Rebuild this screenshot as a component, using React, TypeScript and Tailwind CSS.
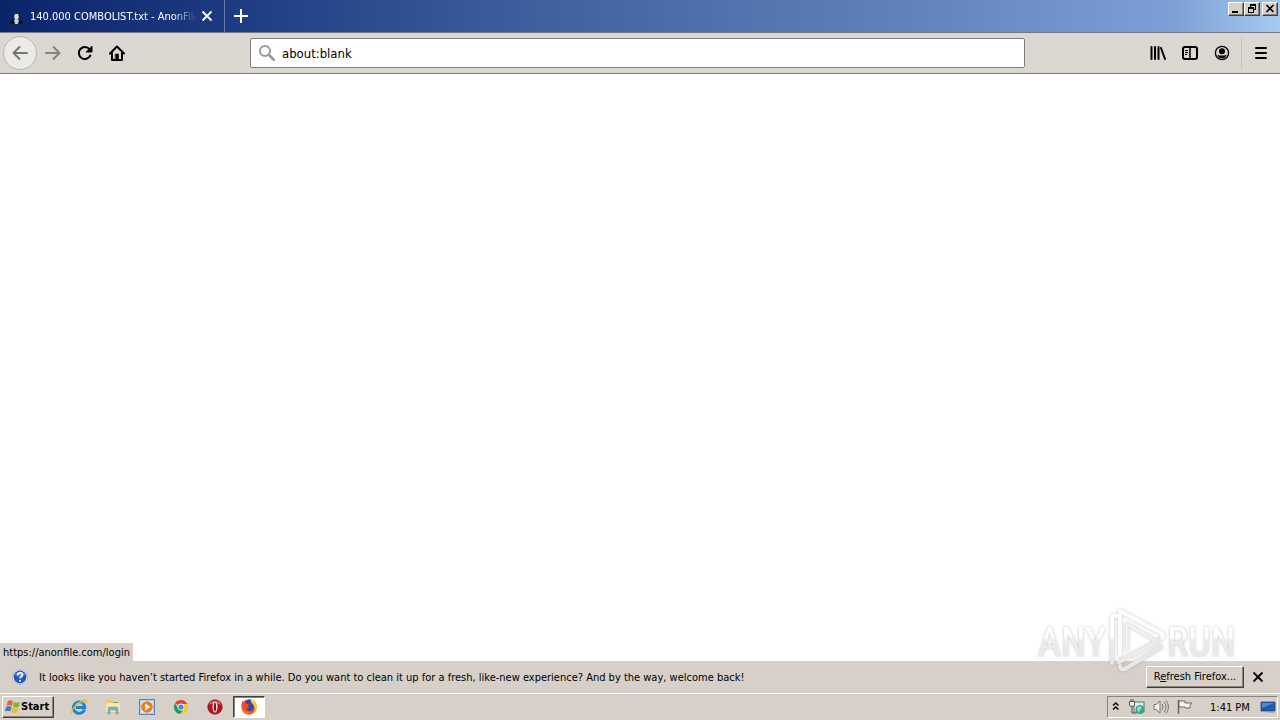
import type { ReactNode } from "react";

const raised =
  "border border-t-white border-l-white border-r-[#404040] border-b-[#404040] bg-[#d6d0c8] shadow-[inset_-1px_-1px_0_#88847c]";

function ToolButton({ label, children }: { label: string; children: ReactNode }) {
  return (
    <button aria-label={label} className="flex size-8 shrink-0 items-center justify-center">
      {children}
    </button>
  );
}

function TitleBar() {
  return (
    <header className="flex h-[33px] shrink-0 items-stretch justify-between border-b border-[#77797f] bg-[linear-gradient(to_right,#0a246a,#1d3b82_18%,#3f609f_42%,#6284bc_72%,#7da1d6_92%,#a6caf0)] text-white">
      <div className="flex">
        <div className="flex w-[225px] items-center border-r border-[#6b7fae] pl-2">
          <svg className="mr-1.5 size-4 shrink-0" viewBox="0 0 16 16" aria-hidden="true">
            <path d="M1 18c0-4 2-6 5-6h5c3 0 4 2 4 6z" fill="#0b0d18" />
            <path d="M6 12l2-1 3 1-1 4H7z" fill="#c8ccd8" />
            <ellipse cx="8.5" cy="8.5" rx="2.2" ry="3.300" fill="#d9dee2" />
            <path d="M5.500 7.500C5 4 7 3.500 9 4c2 0 3 2 2 4l-1-2-3 0z" fill="#25283a" />
          </svg>
          <span className="w-[167px] overflow-hidden pt-0.5 whitespace-nowrap text-[11px] [mask-image:linear-gradient(to_right,black_142px,transparent)]">
            140.000 COMBOLIST.txt - AnonFiles
          </span>
          <button aria-label="Close tab" className="flex size-5 items-center justify-center">
            <svg className="size-3" viewBox="0 0 12 12" fill="none" stroke="white" strokeWidth="1.8">
              <path d="M1.5 1.5l9 9M10.5 1.5l-9 9" />
            </svg>
          </button>
        </div>
        <button aria-label="New tab" className="flex w-8 items-center justify-center">
          <svg className="size-4" viewBox="0 0 16 16" fill="none" stroke="white" strokeWidth="2">
            <path d="M8 1v14M1 8h14" />
          </svg>
        </button>
      </div>
      <div className="flex gap-0.5 pt-0.5 pr-0.5">
        <div className="flex">
          <button aria-label="Minimize" className={`h-[14px] w-4 ${raised}`}>
            <svg className="h-3 w-[14px]" viewBox="0 0 14 12" shapeRendering="crispEdges">
              <path d="M3 8h6v2H3z" />
            </svg>
          </button>
          <button aria-label="Restore" className={`h-[14px] w-4 ${raised}`}>
            <svg className="h-3 w-[14px]" viewBox="0 0 14 12" shapeRendering="crispEdges">
              <path d="M5 1h6v6H9V6h1V3H6v1H5zM3 4h6v6H3zM4 6v3h4V6z" fillRule="evenodd" />
            </svg>
          </button>
        </div>
        <button aria-label="Close window" className={`h-[14px] w-4 ${raised}`}>
          <svg className="h-3 w-[14px]" viewBox="0 0 14 12" fill="none" stroke="black" strokeWidth="1.6">
            <path d="M3.5 2l7 7M10.5 2l-7 7" />
          </svg>
        </button>
      </div>
    </header>
  );
}

function Toolbar() {
  return (
    <nav className="flex h-[41px] shrink-0 items-center border-b border-[#7b7974] bg-[#dbd7d1]">
      <div className="flex w-[250px] shrink-0 items-center pl-[3px]">
        <button
          aria-label="Back"
          className="flex size-[34px] shrink-0 items-center justify-center rounded-full border border-[#b9b5ae] bg-[#eceae6]"
        >
          <svg className="size-4" viewBox="0 0 16 16" fill="none" stroke="#777572" strokeWidth="2" strokeLinecap="round" strokeLinejoin="round">
            <path d="M15 8H1.5M7.5 2l-6 6 6 6" />
          </svg>
        </button>
        <ToolButton label="Forward">
          <svg className="size-4" viewBox="0 0 16 16" fill="none" stroke="#85827d" strokeWidth="2" strokeLinecap="round" strokeLinejoin="round">
            <path d="M1 8h13.500M8.500 2l6 6-6 6" />
          </svg>
        </ToolButton>
        <ToolButton label="Reload">
          <svg className="size-4" viewBox="0 0 16 16" fill="none" stroke="black" strokeWidth="2" strokeLinecap="round">
            <path d="M13.300 10.500A6 6 0 1 1 12.500 4.200L14 6" />
            <path d="M15 1.500V7H9.500z" fill="black" stroke="black" strokeWidth="1" strokeLinejoin="round" />
          </svg>
        </ToolButton>
        <ToolButton label="Home">
          <svg className="size-4" viewBox="0 0 16 16" fill="none" stroke="black" strokeWidth="2" strokeLinecap="round" strokeLinejoin="round">
            <path d="M1 8.500l7-7 7 7M3 8v7h10V8" />
            <path d="M6.500 9h3v6h-3z" fill="black" strokeWidth="0.500" />
          </svg>
        </ToolButton>
      </div>
      <label className="flex h-[30px] min-w-0 flex-1 items-center rounded-[2px] border border-[#7f7d79] bg-white pl-2">
        <svg className="mr-[7px] size-4 shrink-0" viewBox="0 0 16 16" fill="none" stroke="#999" strokeWidth="2" strokeLinecap="round">
          <circle cx="6" cy="6" r="5" />
          <path d="M10 10l5 5" strokeWidth="2.500" />
        </svg>
        <input
          aria-label="Address"
          defaultValue="about:blank"
          className="min-w-0 flex-1 bg-transparent pt-0.5 text-[13px] text-black outline-none"
        />
      </label>
      <div className="flex w-[255px] shrink-0 items-center justify-end pr-[3px]">
        <ToolButton label="Library">
          <svg className="size-4" viewBox="0 0 16 16" fill="none" stroke="black" strokeWidth="2" strokeLinecap="round">
            <path d="M1.500 2v12M5 2v12M8.500 2v12M11 3l4 11" />
          </svg>
        </ToolButton>
        <ToolButton label="Sidebars">
          <svg className="size-4" viewBox="0 0 16 16" fill="none" stroke="black">
            <rect x="1" y="2" width="14" height="12" rx="2" strokeWidth="2" />
            <path d="M8 2v12" strokeWidth="1.500" />
            <path d="M3 5.500h3M3 7.500h3M3 9.500h2" />
          </svg>
        </ToolButton>
        <ToolButton label="Account">
          <svg className="size-4" viewBox="0 0 16 16" fill="none" stroke="black">
            <circle cx="8" cy="8" r="6.600" strokeWidth="1.300" />
            <circle cx="8" cy="6.200" r="3" fill="black" stroke="none" />
            <path d="M3.500 9.500c1 1.200 2.500 1 4.500 1s3.500.2 4.500-1c0 2.500-2 4-4.500 4s-4.500-1.500-4.500-4z" fill="black" stroke="none" />
          </svg>
        </ToolButton>
        <div className="ml-[3px] flex h-8 items-center border-l border-[#c5c1ba] pl-[3px]">
          <ToolButton label="Open menu">
            <svg className="size-4" viewBox="0 0 16 16" fill="none" stroke="black" strokeWidth="2" strokeLinecap="round">
              <path d="M3 3h10M3 8h10M3 13h10" />
            </svg>
          </ToolButton>
        </div>
      </div>
    </nav>
  );
}

function Watermark() {
  return (
    <svg
      className="pointer-events-none absolute right-[40px] bottom-[18px] h-[70px] w-[204px]"
      viewBox="0 0 204 70"
      role="img"
      aria-label="ANY RUN"
    >
      <defs>
        <linearGradient id="fade" gradientUnits="userSpaceOnUse" x1="0" y1="0" x2="0" y2="70">
          <stop offset="0.460" stopColor="#fff" />
          <stop offset="0.500" stopColor="#ececec" />
          <stop offset="1" stopColor="#e6e5e4" />
        </linearGradient>
        <filter id="glow" x="-10%" y="-20%" width="120%" height="140%">
          <feDropShadow dx="0" dy="0" stdDeviation="1.500" floodColor="#777" floodOpacity="0.500" />
        </filter>
      </defs>
      <g filter="url(#glow)" fill="url(#fade)">
        <text x="2" y="51" fontFamily="'Roboto Condensed', 'Liberation Sans Narrow', sans-serif" fontSize="40">
          ANY
        </text>
        <text x="131" y="51" fontFamily="'Roboto Condensed', 'Liberation Sans Narrow', sans-serif" fontSize="40">
          RUN
        </text>
        <g fill="none" strokeWidth="4" strokeLinejoin="round" strokeLinecap="round">
          <path d="M83 11h-4q-3 0-3 3v44" stroke="url(#fade)" />
          <path d="M84 50V6l41 22q3 2 1 5" stroke="#fcfcfc" />
          <path d="M91 45V19l29 17" stroke="#f1f1f1" strokeWidth="3" />
          <path d="M83 57L124 35" stroke="#ebebeb" />
          <path d="M125 42L89 64q-5 1-5-3" stroke="#e9e7e5" />
        </g>
      </g>
    </svg>
  );
}

function NotificationBar() {
  return (
    <aside className="relative flex h-8 shrink-0 items-center bg-[#d6d0c8] pr-[14px] pl-3 text-[11px]">
      <svg className="mr-[11px] size-4 shrink-0" viewBox="0 0 16 16" aria-hidden="true">
        <circle cx="8" cy="8" r="7.500" fill="#e4ecf8" stroke="#8898b8" strokeWidth="0.500" />
        <circle cx="8" cy="8" r="6.400" fill="#2457b8" />
        <path d="M3 6a5.300 5 0 0 1 10 0c-3 2-7 2-10 0z" fill="#5b8bdc" />
        <path d="M5.700 6.300c0-3.500 5-3 4.700-.3C10.300 7.800 8 7.700 8 9.500" fill="none" stroke="white" strokeWidth="1.600" />
        <circle cx="8" cy="11.800" r="1" fill="white" />
      </svg>
      <p className="min-w-0 flex-1 pt-0.5 whitespace-nowrap">
        It looks like you haven’t started Firefox in a while. Do you want to clean it up for a fresh, like-new experience? And by the way, welcome back!
      </p>
      <button className={`mr-1.5 flex h-[22px] w-[98px] items-center justify-center whitespace-nowrap ${raised}`}>
        <span>
          R<u>e</u>fresh Firefox...
        </span>
      </button>
      <button aria-label="Dismiss" className="flex size-4 items-center justify-center">
        <svg className="size-3" viewBox="0 0 12 12" fill="none" stroke="black" strokeWidth="1.800">
          <path d="M1.500 1.500l9 9M10.500 1.500l-9 9" />
        </svg>
      </button>
    </aside>
  );
}

function ExplorerIcon() {
  return (
    <svg className="size-4" viewBox="0 0 16 16">
      <path d="M13.500 10.500A5.700 5.700 0 1 1 13.800 8.500H5" fill="none" stroke="#1684d2" strokeWidth="2.800" />
      <path d="M4 6a5 5 0 0 1 8-1" fill="none" stroke="#65c4f4" strokeWidth="1" />
      <path d="M1 15C-1 11 9 1 14.500 1.200c1.500.3 1 2 .5 3" fill="none" stroke="#e7b92c" strokeWidth="1.300" />
    </svg>
  );
}

function FolderIcon() {
  return (
    <svg className="size-4" viewBox="0 0 16 16">
      <path d="M1 2l1-1h4l1 2h7v11H1z" fill="#e9cb65" />
      <path d="M2 4h12l1 2v7H1V6z" fill="#f9e9a5" />
      <path d="M8 3h5v1H8z" fill="#59ad71" />
      <path d="M3 15V9.500Q3 8 4.500 8h7Q13 8 13 9.500V15h-2v-4H5v4z" fill="#6cb8e7" stroke="#4b94c9" strokeWidth="0.500" />
    </svg>
  );
}

function MediaIcon() {
  return (
    <svg className="size-4" viewBox="0 0 16 16">
      <rect x="0.500" y="0.500" width="15" height="15" fill="#a9cdef" stroke="#5486bd" />
      <path d="M2 2h12v12H2z" fill="#d5e8f8" />
      <circle cx="8" cy="8" r="5.800" fill="#ef7d13" />
      <path d="M6.200 4.500l5 3.500-5 3.500z" fill="white" />
    </svg>
  );
}

function ChromeIcon() {
  return (
    <svg className="size-4" viewBox="0 0 16 16">
      <path d="M8 8L2 4.200A7 7 0 0 1 14.300 5H8z" fill="#dc4437" />
      <path d="M8 8l-2.600 1.500L2 4.200A7 7 0 0 0 7.500 15L10.600 9.500z" fill="#239957" />
      <path d="M8 5h6.300A7 7 0 0 1 7.500 15L10.600 9.500z" fill="#f4c52c" />
      <circle cx="8" cy="8" r="3.400" fill="#f4f4f4" />
      <circle cx="8" cy="8" r="2.600" fill="#4285e8" />
    </svg>
  );
}

function OperaIcon() {
  return (
    <svg className="size-4" viewBox="0 0 16 16">
      <circle cx="8" cy="8" r="7.300" fill="#b51520" stroke="#801018" strokeWidth="0.500" />
      <path d="M2 6a6.300 6 0 0 1 12 0c-3-2-9-2-12 0z" fill="#dc6c6c" />
      <ellipse cx="8" cy="8" rx="2.500" ry="5.500" fill="#f7eded" />
      <ellipse cx="8" cy="8" rx="1.100" ry="4.600" fill="#90101a" />
    </svg>
  );
}

function FirefoxIcon() {
  return (
    <svg className="size-[18px]" viewBox="0 0 16 16">
      <circle cx="8" cy="8" r="6.800" fill="#ef4c23" />
      <path d="M1.300 7L2 2.500l2.500 2L7 3z" fill="#ef4c23" />
      <path d="M9.500 0.800c3 1 6 4 5.500 8A7 7 0 0 1 7 15c4-.5 6.500-3 6-6-.3-3-3.500-4-3.500-8.200z" fill="#ffc72b" />
      <path d="M4.500 3.500Q7 .5 9.300 1.500q0 3 2.500 4.500c1 2 .5 5-2.300 5.500-2 .3-3.500-1-3.500-2.500l2.500-1L7 7l1.700-1.500Q6 6 4.500 3.500z" fill="#2d4bad" />
      <path d="M2 8c1 4 4 5.500 7.500 4.500C7 15.500 2 13 2 8z" fill="#f58a25" />
    </svg>
  );
}

const launchers = [
  { name: "Internet Explorer", icon: <ExplorerIcon /> },
  { name: "Windows Explorer", icon: <FolderIcon /> },
  { name: "Media Player", icon: <MediaIcon /> },
  { name: "Chrome", icon: <ChromeIcon /> },
  { name: "Opera", icon: <OperaIcon /> },
];

function Tray() {
  return (
    <div className="mr-0.5 flex h-[22px] items-center border border-t-[#88847c] border-r-white border-b-white border-l-[#88847c] pr-px pl-1">
      <button aria-label="Show hidden icons" className="mr-[3px] flex size-[14px] items-center justify-start">
        <svg className="mb-0.5 size-2" viewBox="0 0 8 8" fill="none" stroke="black" strokeWidth="1.400">
          <path d="M1 3.500L3.800 1l2.700 2.500M1 7.500L3.800 5l2.700 2.500" />
        </svg>
      </button>
      <svg className="size-4" viewBox="0 0 16 16" role="img" aria-label="Network">
        <rect x="5" y="3" width="10" height="10" fill="#d9eeee" stroke="#557b7b" />
        <path d="M0.500 2.500h5V6q0 1.500-2.500 1.500T.500 6z" fill="#eee" stroke="#555" />
        <path d="M3 7.500V14h5M2 0v3M4 0v3" fill="none" stroke="#555" />
        <circle cx="11" cy="10.500" r="4.500" fill="#3aa38e" />
        <path d="M8 9q3-4 5 0l-2 2-1 3-2-3z" fill="#91d6ca" />
      </svg>
      <svg className="ml-2 size-4" viewBox="0 0 16 16" fill="none" stroke="#777" role="img" aria-label="Volume">
        <path d="M1 5.500h2L7 2v12L3 10.500H1z" fill="#f3f2ef" strokeLinejoin="round" />
        <path d="M9 5q2 3 0 6M11 3q4 5 0 10M13 1.500q5 6.500 0 13" />
      </svg>
      <svg className="ml-2 size-4" viewBox="0 0 16 16" fill="#f5f4f1" stroke="#666" role="img" aria-label="Action center">
        <path d="M1.500 1v14" strokeWidth="1.500" />
        <path d="M2 2h6v2h7l-2 2.500V9H8V8H2z" />
      </svg>
      <time className="mr-[10px] ml-[17px] w-10 pt-0.5 whitespace-nowrap text-[11px]">1:41 PM</time>
      <button aria-label="Show desktop" className="size-4">
        <svg className="size-4" viewBox="0 0 16 16">
          <path d="M1 3h14v9H1z" fill="#2459ae" stroke="#173b79" strokeWidth="0.700" />
          <path d="M2 4h12L2 9z" fill="#4d8cdb" />
          <path d="M7 12h8v1.500H7z" fill="#8999a8" />
        </svg>
      </button>
    </div>
  );
}

function Taskbar() {
  return (
    <footer className="flex h-[27px] shrink-0 items-center border-t border-white bg-[#d6d0c8]">
      <button className={`ml-0.5 flex h-[22px] w-[52px] shrink-0 items-center whitespace-nowrap pl-0.5 ${raised}`}>
        <svg className="size-4 shrink-0" viewBox="0 0 16 16" aria-hidden="true">
          <path d="M3 2q3-1.500 5 .5L6.800 7Q4 5.500 1.500 7z" fill="#e8632b" />
          <path d="M9 3q3 1.500 6 0l-1.500 5Q10 9 8 7.500z" fill="#80b33b" />
          <path d="M1.200 8Q4 6.500 6.500 8L5.300 12.500Q3 11 0 12.300z" fill="#3977c8" />
          <path d="M7.500 8.500q3 1.500 5.800.5L12 13.500Q9 15 6.300 13z" fill="#edbb2f" />
        </svg>
        <span className="text-[11px] font-bold">Start</span>
      </button>
      <div className="ml-2 flex">
        {launchers.map((item) => (
          <button key={item.name} aria-label={item.name} className="flex h-[22px] w-[34px] items-center justify-center">
            {item.icon}
          </button>
        ))}
        <button
          aria-label="Firefox"
          className="ml-px flex h-[22px] w-8 items-center justify-center border border-t-[#404040] border-r-white border-b-white border-l-[#404040] bg-white shadow-[inset_1px_1px_0_#88847c]"
        >
          <FirefoxIcon />
        </button>
      </div>
      <div className="flex-1" />
      <Tray />
    </footer>
  );
}

export default function App() {
  return (
    <div className="flex min-h-screen flex-col bg-white font-['DejaVu_Sans_Condensed','Noto_Sans',sans-serif] text-black">
      <TitleBar />
      <Toolbar />
      <main className="relative flex-1">
        <a
          href="https://anonfile.com/login"
          className="absolute bottom-0 left-0 flex h-[18px] items-center bg-[#d6d0c8] pt-0.5 pr-[3px] pl-[3px] text-[11px]"
        >
          https://anonfile.com/login
        </a>
      </main>
      <div className="relative">
        <NotificationBar />
        <Watermark />
      </div>
      <Taskbar />
    </div>
  );
}
